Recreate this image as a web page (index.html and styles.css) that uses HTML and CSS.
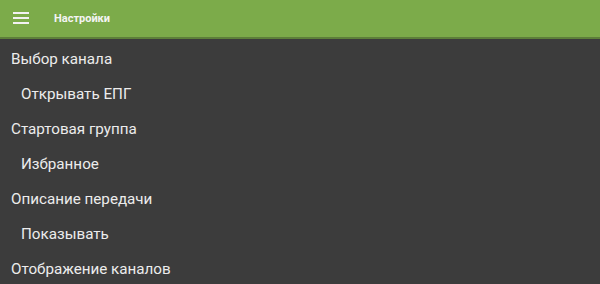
FILE: index.html
```html
<!DOCTYPE html>
<html lang="ru">
<head>
    <meta charset="UTF-8">
    <title>Настройки</title>
    <link rel="stylesheet" href="styles.css">
</head>
<body>
    <div class="toolbar">
        <svg class="menu-icon" width="16" height="12" viewBox="0 0 16 12">
            <rect x="0" y="0" width="16" height="2" fill="#f2f2f2"/>
            <rect x="0" y="5" width="16" height="2" fill="#f2f2f2"/>
            <rect x="0" y="10" width="16" height="2" fill="#f2f2f2"/>
        </svg>
        <span class="title">Настройки</span>
    </div>

    <div class="settings">
        <div class="row group">Выбор канала</div>
        <div class="row value">Открывать ЕПГ</div>
        <div class="row group">Стартовая группа</div>
        <div class="row value">Избранное</div>
        <div class="row group">Описание передачи</div>
        <div class="row value">Показывать</div>
        <div class="row group">Отображение каналов</div>
    </div>
</body>
</html>
```

FILE: styles.css
```css
html, body {
    margin: 0;
    padding: 0;
}
body {
    font-family: Roboto, "Liberation Sans", sans-serif;
    background: #3c3c3c;
    color: #ececec;
    overflow: hidden;
}
.toolbar {
    height: 37px;
    background: #7cab4a;
    border-bottom: 2px solid #5d7f3a;
    display: flex;
    align-items: center;
    padding-left: 13px;
}
.menu-icon {
    margin-top: -1px;
}
.title {
    margin-left: 25px;
    font-size: 11px;
    font-weight: bold;
    color: #f4f4f4;
}
.settings {
    padding-top: 3px;
}
.row {
    height: 35px;
    line-height: 35px;
    font-size: 15.2px;
    white-space: nowrap;
}
.group {
    padding-left: 11px;
}
.value {
    padding-left: 21px;
}
```
